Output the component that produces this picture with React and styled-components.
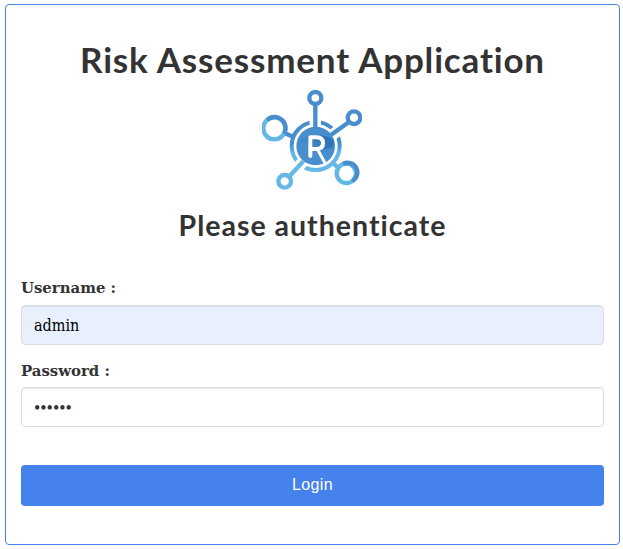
import React from "react";
import styled, { createGlobalStyle } from "styled-components";

const GlobalStyle = createGlobalStyle`
  *, *::before, *::after { box-sizing: border-box; }
  body { margin: 0; background: #fff; color: #333; font-family: "DejaVu Serif", Georgia, serif; }
`;

const Panel = styled.main`
  display: flex;
  flex-direction: column;
  width: 615px;
  height: 541px;
  margin: 4px 0 0 5px;
  padding: 33px 15px 0;
  border: 1px solid #4582ec;
  border-radius: 4px;
`;

const Header = styled.header`
  display: flex;
  flex-direction: column;
  align-items: center;
`;

const Title = styled.h1`
  margin: 0;
  height: 44px;
  font: 700 35px/42px Lato, sans-serif;
  letter-spacing: 0.82px;
  white-space: nowrap;
`;

const Subtitle = styled.h2`
  margin: 17px 0 1px;
  height: 36px;
  font: 700 28.5px/36px Lato, sans-serif;
  letter-spacing: 1px;
  white-space: nowrap;
`;

const LogoMark = styled.svg`
  display: block;
  width: 100px;
  height: 100px;
  margin: 8px 2px 0 0;
`;

const Form = styled.form`
  display: flex;
  flex-direction: column;
  margin-top: 34px;
`;

const Field = styled.div`
  display: flex;
  flex-direction: column;
  margin-bottom: 15px;
`;

const Label = styled.label`
  height: 24px;
  margin-bottom: 3px;
  font-size: 14.9px;
  font-weight: 700;
  line-height: ${({ $leading }) => $leading || "20px"};
`;

const Input = styled.input`
  width: 100%;
  height: 40px;
  padding: ${({ type }) => (type === "password" ? "9px 12px 7px" : "8px 12px")};
  border: 1px solid #ddd;
  border-radius: 4px;
  outline: none;
  background: ${({ $filled }) => ($filled ? "#e8f0fe" : "#fff")};
  box-shadow: inset 0 1px 1px rgba(0, 0, 0, 0.075);
  color: ${({ $filled }) => ($filled ? "#000" : "#333")};
  font: ${({ type }) =>
    type === "password"
      ? '18px/22px "Liberation Serif", Georgia, serif'
      : '16px/22px "DejaVu Serif Condensed", "DejaVu Serif", Georgia, serif'};
`;

const LoginButton = styled.button`
  height: 41px;
  margin-top: 23px;
  padding: 0 0 2px;
  border: 0;
  border-radius: 4px;
  background: #4582ec;
  color: #fff;
  font: 16px/22px "Liberation Sans", Arial, sans-serif;
  letter-spacing: 0.4px;
`;

function Logo() {
  return (
    <LogoMark viewBox="21 15 300 300" role="img" aria-label="Risk network">
      <defs>
        <linearGradient id="tone" x1="0" y1="0" x2="0" y2="1">
          <stop offset="0.45" stopColor="#488dcc" />
          <stop offset="0.65" stopColor="#65b7e7" />
        </linearGradient>
        <linearGradient id="face" x1="0" y1="0.7" x2="1" y2="0.3">
          <stop offset="0.1" stopColor="#488dcc" />
          <stop offset="0.8" stopColor="#2f74b6" />
        </linearGradient>
      </defs>
      <circle cx="182" cy="183" r="72" fill="none" stroke="url(#tone)" strokeWidth="12" />
      <path d="M181 62V125M275 119L224 155M104 273L145 229" stroke="#fff" strokeWidth="34" />
      <path d="M181 60V132M279 113L218 157M90 145L114 155" stroke="#488dcc" strokeWidth="13" />
      <path d="M104 273L145 229M235 236L251 248" stroke="#65b7e7" strokeWidth="13" />
      <circle cx="182" cy="183" r="58" fill="#488dcc" />
      <path d="M131 167C160 152 208 140 236 166C241 185 227 193 208 194C181 195 157 185 131 167Z" fill="url(#face)" />
      <g fill="#fff" strokeWidth="13">
        <circle cx="181" cy="39" r="18" stroke="#488dcc" />
        <circle cx="297" cy="98" r="19" stroke="#488dcc" />
        <circle cx="58" cy="130" r="33" stroke="#65b7e7" />
        <path d="M36 105A33 33 0 0 1 87 146" fill="none" stroke="#488dcc" />
        <circle cx="89" cy="289" r="19" stroke="#65b7e7" />
        <circle cx="274" cy="265" r="29" stroke="#65b7e7" />
        <path d="M264 237A29 29 0 0 1 292 288" fill="none" stroke="#488dcc" />
      </g>
      <path d="M166 213V157H184Q204 157 204 174Q204 192 184 192H170" fill="none" stroke="#fff" strokeWidth="12" strokeLinecap="round" strokeLinejoin="round" />
      <path d="M188 194L212 238" stroke="#fff" strokeWidth="9" />
    </LogoMark>
  );
}

export default function App() {
  return (
    <>
      <GlobalStyle />
      <Panel>
        <Header>
          <Title>Risk Assessment Application</Title>
          <Logo />
          <Subtitle>Please authenticate</Subtitle>
        </Header>
        <Form onSubmit={(event) => event.preventDefault()}>
          <Field>
            <Label htmlFor="username">Username :</Label>
            <Input id="username" type="text" defaultValue="admin" $filled />
          </Field>
          <Field>
            <Label htmlFor="password" $leading="22px">Password :</Label>
            <Input id="password" type="password" defaultValue="secret" />
          </Field>
          <LoginButton type="submit">Login</LoginButton>
        </Form>
      </Panel>
    </>
  );
}
